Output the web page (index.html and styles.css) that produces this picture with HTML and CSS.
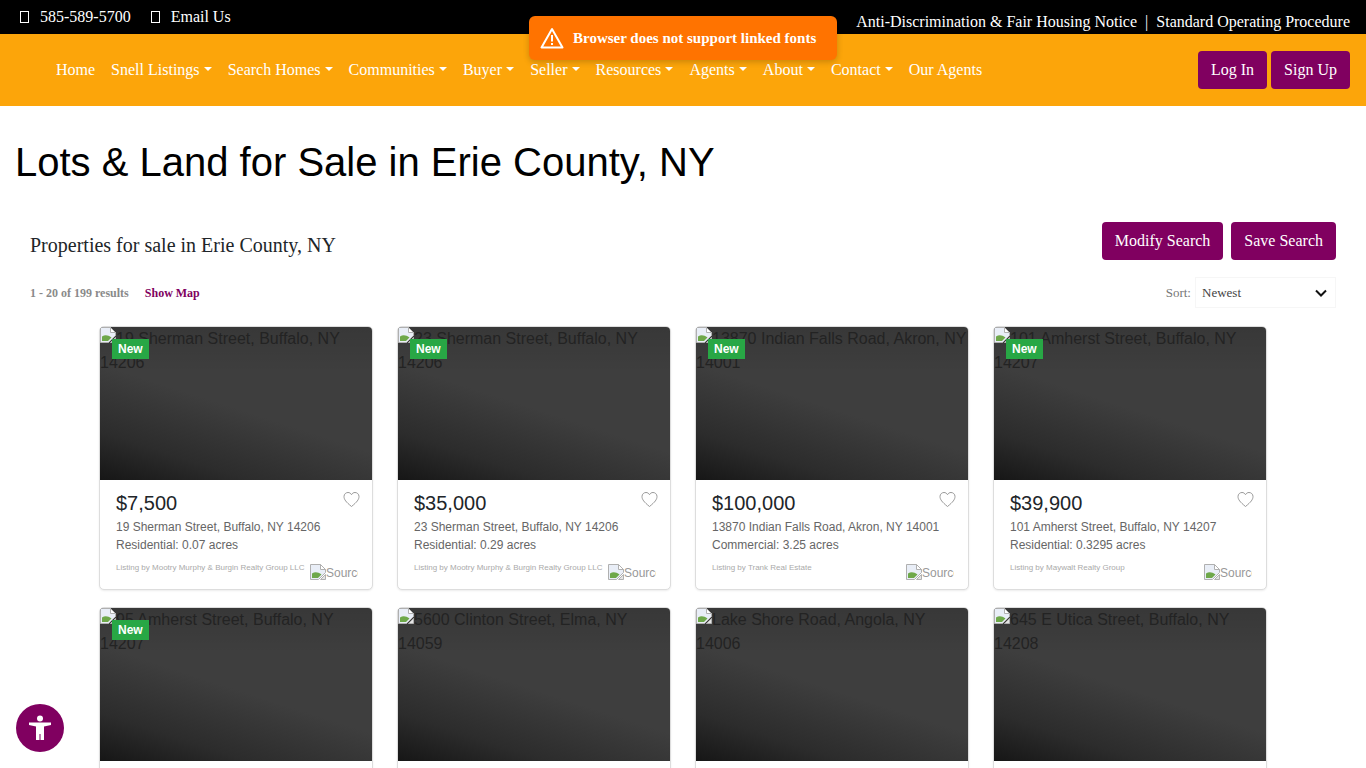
FILE: index.html
```html
<!DOCTYPE html>
<html>
<head>
    <meta charset="utf-8" />
    <title>Lots &amp; Land for Sale in Erie County, NY</title>
    <link rel="stylesheet" href="styles.css">
</head>
<body>
    <svg class="defs" width="0" height="0">
        <symbol id="broken" viewBox="0 0 16 16">
            <path d="M.5.5h10l5 5v3l-7 7H.5z" fill="#e9eef7" stroke="#b0b0b0"/>
            <path d="M10.500.5v5h5z" fill="#fff" stroke="#b0b0b0"/>
            <path d="M2 14V9.500C5 7.500 8 8 11.500 10.500L8 14z" fill="#6ea84a"/>
            <path d="M10.500 15.500l5-5v5z" fill="#e4e4e4" stroke="#b0b0b0"/>
        </symbol>
    </svg>

    <div class="topbar">
        <div class="top_left">
            <span class="tofu"></span><span class="top_text">585-589-5700</span>
            <span class="tofu"></span><span>Email Us</span>
        </div>
        <div class="top_right">
            <span>Anti-Discrimination &amp; Fair Housing Notice</span>
            <span class="sep">|</span>
            <span>Standard Operating Procedure</span>
        </div>
    </div>

    <div class="navbar">
        <ul class="nav">
            <li>Home</li>
            <li class="drop">Snell Listings</li>
            <li class="drop">Search Homes</li>
            <li class="drop">Communities</li>
            <li class="drop">Buyer</li>
            <li class="drop">Seller</li>
            <li class="drop">Resources</li>
            <li class="drop">Agents</li>
            <li class="drop">About</li>
            <li class="drop">Contact</li>
            <li>Our Agents</li>
        </ul>
        <div class="account">
            <a class="btn">Log In</a>
            <a class="btn">Sign Up</a>
        </div>
    </div>

    <div class="toast">
        <svg width="24" height="22" viewBox="0 0 24 22">
            <path d="M12 2L1.500 20.500h21z" fill="none" stroke="#fff" stroke-width="2" stroke-linejoin="round"/>
            <path d="M12 8v6.500M12 16v2" stroke="#fff" stroke-width="2"/>
        </svg>
        <span>Browser does not support linked fonts</span>
    </div>

    <h1 class="page_title">Lots &amp; Land for Sale in Erie County, NY</h1>

    <div class="result_head">
        <h2>Properties for sale in Erie County, NY</h2>
        <div class="result_btns">
            <a class="btn">Modify Search</a>
            <a class="btn">Save Search</a>
        </div>
    </div>

    <div class="result_bar">
        <div class="counts">
            <span>1 - 20 of 199 results</span>
            <a>Show Map</a>
        </div>
        <div class="sort">
            <span class="sort_label">Sort:</span>
            <div class="sort_box">
                <span>Newest</span>
                <svg width="12" height="8" viewBox="0 0 12 8"><path d="M1 1.500l5 5 5-5" fill="none" stroke="#111" stroke-width="2"/></svg>
            </div>
        </div>
    </div>

    <div class="listings">
        <div class="card">
            <div class="photo"><svg class="broken"><use href="#broken"/></svg>19 Sherman Street, Buffalo, NY 14206<span class="badge">New</span></div>
            <div class="info">
                <svg class="heart" viewBox="0 0 17 17"><path d="M8.500 15.500C3 11 1 8.500 1 5.500 1 3 3 1.500 5 1.500c1.500 0 2.800.8 3.500 2.200.7-1.400 2-2.200 3.500-2.200 2 0 4 1.500 4 4 0 3-2 5.500-7.500 10z" fill="none" stroke="#999"/></svg>
                <div class="price">$7,500</div>
                <div class="addr">19 Sherman Street, Buffalo, NY 14206</div>
                <div class="addr">Residential: 0.07 acres</div>
                <div class="source">
                    <span class="by">Listing by Mootry Murphy &amp; Burgin Realty Group LLC</span>
                    <span class="logo"><svg class="broken"><use href="#broken"/></svg>Source</span>
                </div>
            </div>
        </div>
        <div class="card">
            <div class="photo"><svg class="broken"><use href="#broken"/></svg>23 Sherman Street, Buffalo, NY 14206<span class="badge">New</span></div>
            <div class="info">
                <svg class="heart" viewBox="0 0 17 17"><path d="M8.500 15.500C3 11 1 8.500 1 5.500 1 3 3 1.500 5 1.500c1.500 0 2.800.8 3.500 2.200.7-1.400 2-2.200 3.500-2.200 2 0 4 1.500 4 4 0 3-2 5.500-7.500 10z" fill="none" stroke="#999"/></svg>
                <div class="price">$35,000</div>
                <div class="addr">23 Sherman Street, Buffalo, NY 14206</div>
                <div class="addr">Residential: 0.29 acres</div>
                <div class="source">
                    <span class="by">Listing by Mootry Murphy &amp; Burgin Realty Group LLC</span>
                    <span class="logo"><svg class="broken"><use href="#broken"/></svg>Source</span>
                </div>
            </div>
        </div>
        <div class="card">
            <div class="photo"><svg class="broken"><use href="#broken"/></svg>13870 Indian Falls Road, Akron, NY 14001<span class="badge">New</span></div>
            <div class="info">
                <svg class="heart" viewBox="0 0 17 17"><path d="M8.500 15.500C3 11 1 8.500 1 5.500 1 3 3 1.500 5 1.500c1.500 0 2.800.8 3.500 2.200.7-1.400 2-2.200 3.500-2.200 2 0 4 1.500 4 4 0 3-2 5.500-7.500 10z" fill="none" stroke="#999"/></svg>
                <div class="price">$100,000</div>
                <div class="addr">13870 Indian Falls Road, Akron, NY 14001</div>
                <div class="addr">Commercial: 3.25 acres</div>
                <div class="source">
                    <span class="by">Listing by Trank Real Estate</span>
                    <span class="logo"><svg class="broken"><use href="#broken"/></svg>Source</span>
                </div>
            </div>
        </div>
        <div class="card">
            <div class="photo"><svg class="broken"><use href="#broken"/></svg>101 Amherst Street, Buffalo, NY 14207<span class="badge">New</span></div>
            <div class="info">
                <svg class="heart" viewBox="0 0 17 17"><path d="M8.500 15.500C3 11 1 8.500 1 5.500 1 3 3 1.500 5 1.500c1.500 0 2.800.8 3.500 2.200.7-1.400 2-2.200 3.500-2.200 2 0 4 1.500 4 4 0 3-2 5.500-7.500 10z" fill="none" stroke="#999"/></svg>
                <div class="price">$39,900</div>
                <div class="addr">101 Amherst Street, Buffalo, NY 14207</div>
                <div class="addr">Residential: 0.3295 acres</div>
                <div class="source">
                    <span class="by">Listing by Maywalt Realty Group</span>
                    <span class="logo"><svg class="broken"><use href="#broken"/></svg>Source</span>
                </div>
            </div>
        </div>
        <div class="card">
            <div class="photo"><svg class="broken"><use href="#broken"/></svg>95 Amherst Street, Buffalo, NY 14207<span class="badge">New</span></div>
        </div>
        <div class="card">
            <div class="photo"><svg class="broken"><use href="#broken"/></svg>5600 Clinton Street, Elma, NY 14059</div>
        </div>
        <div class="card">
            <div class="photo"><svg class="broken"><use href="#broken"/></svg>Lake Shore Road, Angola, NY 14006</div>
        </div>
        <div class="card">
            <div class="photo"><svg class="broken"><use href="#broken"/></svg>645 E Utica Street, Buffalo, NY 14208</div>
        </div>
    </div>

    <div class="access">
        <svg width="28" height="28" viewBox="0 0 28 28">
            <circle cx="14" cy="4.500" r="3" fill="#fff"/>
            <path d="M3 8.500h22v2.500l-7 1.500V26h-3.500v-6h-1v6H10V12.500L3 11z" fill="#fff"/>
        </svg>
    </div>
</body>
</html>
```

FILE: styles.css
```css
html, body {
    height:768px;
    overflow:hidden;
}
body {
    margin:0;
    background:#fff;
    color:#212529;
    font-family:"Liberation Serif", serif;
    font-size:16px;
}
.defs {
    position:absolute;
}
a {
    text-decoration:none;
}

/* top black bar */
.topbar {
    height:34px;
    background:#000;
    color:#fff;
    display:flex;
    justify-content:space-between;
    align-items:center;
    padding:0 16px 0 20px;
}
.top_left {
    display:flex;
    align-items:center;
}
.tofu {
    width:7px;
    height:10px;
    border:1px solid #fff;
    margin-right:11px;
}
.top_text {
    margin-right:20px;
}
.top_right {
    height:24px;
    line-height:20px;
    margin-top:14px;
    white-space:nowrap;
}
.sep {
    margin:0 4px;
}

/* orange nav */
.navbar {
    height:72px;
    background:#fca50a;
    display:flex;
    justify-content:space-between;
    align-items:center;
    padding:0 16px 0 48px;
}
.nav {
    list-style:none;
    margin:0;
    padding:0;
    display:flex;
    color:#fff;
}
.nav li {
    padding:0 8px;
    white-space:nowrap;
}
.nav .drop:after {
    content:'';
    display:inline-block;
    margin-left:4.100px;
    vertical-align:4px;
    border-top:4.800px solid #fff;
    border-left:4.800px solid transparent;
    border-right:4.800px solid transparent;
}
.account {
    display:flex;
    gap:4px;
}
.btn {
    display:block;
    height:38px;
    line-height:38px;
    padding:0 13px;
    background:#800060;
    color:#fff;
    border-radius:4px;
    white-space:nowrap;
}

/* warning toast */
.toast {
    position:absolute;
    left:529px;
    top:16px;
    width:308px;
    height:44px;
    box-sizing:border-box;
    padding-left:11px;
    display:flex;
    align-items:center;
    gap:9px;
    background:#ff7300;
    color:#fff;
    font-size:15px;
    font-weight:bold;
    border-radius:6px;
    box-shadow:0 2px 6px rgba(0,0,0,.2);
}

.page_title {
    margin:0;
    padding:32px 0 0 15px;
    font-family:"Liberation Sans", sans-serif;
    font-size:40px;
    font-weight:normal;
    line-height:48px;
    color:#000;
}

.result_head {
    display:flex;
    justify-content:space-between;
    margin-top:36px;
    padding:0 30px;
}
.result_head h2 {
    margin:0;
    padding-top:11px;
    font-size:20px;
    font-weight:normal;
    line-height:24px;
}
.result_btns {
    display:flex;
    gap:8px;
}

.result_bar {
    display:flex;
    justify-content:space-between;
    align-items:center;
    margin-top:17px;
    padding:0 30px;
    height:31px;
}
.counts {
    padding-top:2px;
    font-size:12px;
    font-weight:bold;
    color:#8a8a8a;
}
.counts a {
    margin-left:13px;
    color:#800060;
}
.sort {
    display:flex;
    align-items:center;
    gap:4px;
    font-size:13px;
    color:#777;
}
.sort_label {
    padding-top:1px;
}
.sort_box {
    width:141px;
    height:31px;
    box-sizing:border-box;
    padding:1px 8px 0 6px;
    display:flex;
    justify-content:space-between;
    align-items:center;
    border:1px solid #f6f6f6;
    color:#444;
}

/* listing cards */
.listings {
    display:grid;
    grid-template-columns:repeat(4, 274px);
    gap:17px 24px;
    justify-content:center;
    margin-top:18px;
}
.card {
    height:264px;
    box-sizing:border-box;
    border:1px solid #ddd;
    border-radius:5px;
    overflow:hidden;
    background:#fff;
    box-shadow:0 1px 2px rgba(0,0,0,.08);
}
.photo {
    position:relative;
    height:153px;
    font-family:"Liberation Sans", sans-serif;
    line-height:24px;
    color:#232323;
    background:linear-gradient(to bottom, rgba(0,0,0,.1), rgba(0,0,0,0) 30%), linear-gradient(18deg, #161616 0, #2c2c2c 20%, #3e3e3e 48%, #3e3e3e 100%);
}
.broken {
    width:16px;
    height:16px;
    vertical-align:top;
}
.badge {
    position:absolute;
    left:12px;
    top:12px;
    height:20px;
    padding:0 6px;
    background:#28a745;
    color:#fff;
    font-size:12px;
    font-weight:bold;
    line-height:20px;
}
.info {
    position:relative;
    padding:9px 16px 0;
    font-family:"Liberation Sans", sans-serif;
}
.heart {
    position:absolute;
    right:12px;
    top:11px;
    width:17px;
    height:17px;
}
.price {
    font-size:20px;
    line-height:29px;
}
.addr {
    font-size:12px;
    line-height:18px;
    color:#666;
}
.source {
    display:flex;
    justify-content:space-between;
    margin-top:7px;
}
.by {
    font-size:8px;
    line-height:14px;
    color:#aaa;
    white-space:nowrap;
}
.logo {
    width:48px;
    height:18px;
    overflow:hidden;
    margin:3px -2px 0 0;
    font-size:12px;
    line-height:18px;
    color:#999;
    white-space:nowrap;
    flex:none;
}

.access {
    position:fixed;
    left:16px;
    top:704px;
    width:48px;
    height:48px;
    border-radius:50%;
    background:#800060;
    display:flex;
    justify-content:center;
    align-items:center;
}
```
